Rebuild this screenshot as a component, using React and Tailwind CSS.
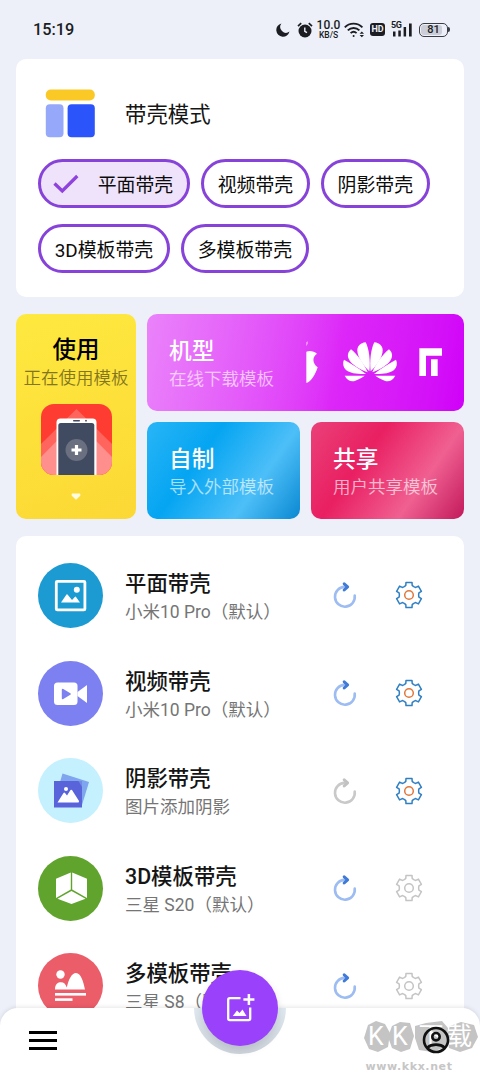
import { useState } from "react";

const modes = ["平面带壳", "视频带壳", "阴影带壳", "3D模板带壳", "多模板带壳"];

const items = [
  { title: "平面带壳", sub: "小米10 Pro（默认）", bg: "bg-[#1b9bd1]", icon: PictureIcon, reset: true, config: true },
  { title: "视频带壳", sub: "小米10 Pro（默认）", bg: "bg-[#7d80f0]", icon: VideoIcon, reset: true, config: true },
  { title: "阴影带壳", sub: "图片添加阴影", bg: "bg-[#c5f0fe]", icon: ShadowIcon, reset: false, config: true },
  { title: "3D模板带壳", sub: "三星 S20（默认）", bg: "bg-[#60a42e]", icon: CubeIcon, reset: true, config: false },
  { title: "多模板带壳", sub: "三星 S8（默认）", bg: "bg-[#eb5d69]", icon: MultiIcon, reset: true, config: false },
];

function PictureIcon() {
  return (
    <svg width="65" height="65" viewBox="0 0 65 65" fill="none">
      <rect x="18.3" y="18.3" width="28.6" height="28.6" rx="1" stroke="#fff" strokeWidth="2.8" />
      <path d="M23 39.5L28.5 31.5Q29 31 29.5 31.5L34 37L37 33.8Q37.6 33.3 38 34L42 39.5Z" fill="#fff" />
      <circle cx="38.8" cy="26.8" r="3" fill="#fff" />
    </svg>
  );
}

function VideoIcon() {
  return (
    <svg width="65" height="65" viewBox="0 0 65 65">
      <rect x="16" y="21.5" width="23.5" height="22.5" rx="3.5" fill="#fff" />
      <path d="M39.5 31L49 24V42L39.5 35Z" fill="#fff" />
      <path d="M24.8 28.8L31.8 33L24.8 37.2Z" fill="#7d80f0" stroke="#7d80f0" strokeWidth="2" strokeLinejoin="round" />
    </svg>
  );
}

function ShadowIcon() {
  return (
    <svg width="65" height="65" viewBox="0 0 65 65">
      <path d="M24.5 15.5L51 24L44 47L18 38Z" fill="#7fa5ee" />
      <path d="M16 23H40.5L44 26V49.5H16Z" fill="#5964da" />
      <path d="M40.5 23H44V29Z" fill="#6f8be6" />
      <path d="M19.5 44.5L25.5 35Q26.3 34 27 35L29 37.5L32.5 32Q33.2 31.3 34 32L41 43Q41.3 44.5 40 44.5Z" fill="#fff" />
      <circle cx="28" cy="31" r="2" fill="#fff" />
    </svg>
  );
}

function CubeIcon() {
  return (
    <svg width="65" height="65" viewBox="0 0 65 65" fill="#fff">
      <path d="M32.8 16.5V33.5L18 42V22.8Z" />
      <path d="M34.2 16.5L49 22.8V42L34.2 33.5Z" />
      <path d="M33.5 35L47.5 42.8L33.5 48L19.5 42.8Z" />
    </svg>
  );
}

function MultiIcon() {
  return (
    <svg width="65" height="65" viewBox="0 0 65 65" fill="#fff">
      <circle cx="22.5" cy="21.5" r="4.2" />
      <path d="M17 36.5C17 31 20 29.3 23 29.3C26 29.3 27.5 31 28.8 34.5C30.5 27 33.5 20 38 20C43 20 45.5 29 47 36.5Z" />
      <rect x="17" y="40" width="31" height="2.6" />
      <rect x="17" y="45.3" width="17.5" height="2.6" />
    </svg>
  );
}

function ResetIcon({ active }) {
  return (
    <svg width="26" height="28" viewBox="0 0 26 28" fill="none" strokeLinecap="round" strokeLinejoin="round">
      <path d="M22.7 14.5A9.9 9.9 0 1 1 12.6 5.9" stroke={active ? "#9dbcf2" : "#c9c9c9"} strokeWidth="2.6" />
      <path d="M12.2 2.8L15.6 5.9L12.2 9" stroke={active ? "#3f7ad8" : "#c2c2c2"} strokeWidth="3" />
    </svg>
  );
}

// six identical teeth, each one turned by 60 degrees
const gearPath =
  [0, 60, 120, 180, 240, 300]
    .map((deg, i) => {
      const a = (deg * Math.PI) / 180;
      const p = (x, y) =>
        `${(x * Math.cos(a) - y * Math.sin(a)).toFixed(2)} ${(x * Math.sin(a) + y * Math.cos(a)).toFixed(2)}`;
      return `${i ? "L" : "M"}${p(-4.4, -8.6)}L${p(-3.2, -9.6)}L${p(-3, -12.6)}L${p(3, -12.6)}L${p(3.2, -9.6)}L${p(4.4, -8.6)}`;
    })
    .join("") + "Z";

function GearIcon({ active }) {
  return (
    <svg width="28" height="28" viewBox="-14 -14 28 28" fill="none">
      <path d={gearPath} stroke={active ? "#2f7fc3" : "#c4c4c4"} strokeWidth="1.5" strokeLinejoin="round" />
      <circle r="4.3" stroke={active ? "#e0783c" : "#c4c4c4"} strokeWidth="1.5" />
    </svg>
  );
}

function StatusBar() {
  return (
    <div className="h-[59px] shrink-0 flex items-center justify-between pl-[33px] pr-[30px] text-[#1b1d22]">
      <span className="text-[16.3px] leading-5 font-medium">15:19</span>
      <div className="flex items-center">
        <svg width="14" height="14" viewBox="0 0 14 14" className="mr-[7px]">
          <path d="M5.4 0.5A5.8 5.8 0 0 0 13.5 8.6A6.7 6.7 0 1 1 5.4 0.5Z" fill="currentColor" />
        </svg>
        <svg width="16" height="16" viewBox="0 0 16 16" fill="none" className="mr-[4px]">
          <circle cx="8" cy="9" r="6.5" fill="currentColor" />
          <path d="M1 4.2L4.2 1.2M15 4.2L11.8 1.2" stroke="currentColor" strokeWidth="1.7" />
          <path d="M7.8 5.5V9.3L10 10.6" stroke="#edf0f9" strokeWidth="1.4" />
        </svg>
        <div className="w-[23px] mr-[4px] -mt-px flex flex-col items-center font-medium">
          <span className="text-[12px] leading-[11px]">10.0</span>
          <span className="text-[8.5px] leading-[8px]">KB/S</span>
        </div>
        <svg width="21" height="16" viewBox="0 0 21 16" fill="none" stroke="currentColor" strokeWidth="1.9" className="mr-[5px]">
          <path d="M0.8 5.3C5.5 0.4 13.5 0.4 18.4 5.3M3.8 8.4C7 5.2 12.2 5.2 15.4 8.4M6.6 11.1C8.4 9.5 10.8 9.5 12.6 11.1" />
          <circle cx="9.6" cy="14" r="1" fill="currentColor" stroke="none" />
          <path d="M15.6 11.7L17.8 9.4L20 11.7ZM15.6 13L17.8 15.3L20 13Z" fill="currentColor" stroke="none" />
        </svg>
        <span className="w-[15px] h-[13px] mr-[6px] rounded-[3px] bg-[#1b1d22] text-[#edf0f9] text-[9px] leading-[13px] font-bold text-center">
          HD
        </span>
        <div className="relative w-[22px] h-[16px] mr-[6px]">
          <span className="absolute left-0 -top-px text-[9px] leading-[8px] font-bold tracking-[-0.5px]">5G</span>
          <svg width="22" height="16" viewBox="0 0 22 16" fill="currentColor">
            <path d="M2 9.5H4.5V14.5H2ZM7.3 8.5H9.8V14.5H7.3ZM12.6 5H15.1V14.5H12.6ZM18 1.5H20.7V14.5H18Z" />
          </svg>
        </div>
        <div className="w-[29px] h-[14px] rounded-[5px] border border-[#3a3d44] p-px">
          <div className="w-[21px] h-[10px] rounded-[3px] bg-[#cbced8] text-[11px] leading-[10.5px] font-medium text-center pl-[4px]">
            81
          </div>
        </div>
        <div className="w-[2px] h-[5px] rounded-r bg-[#3a3d44]" />
      </div>
    </div>
  );
}

function ModeCard() {
  const [selected, setSelected] = useState("平面带壳");

  return (
    <section className="h-[238px] shrink-0 mx-4 rounded-[10px] bg-white px-[22px]">
      <div className="flex items-center h-[100px] pt-[10px] pl-[7px]">
        <svg width="50" height="49" viewBox="0 0 50 49" className="-mt-[2px]">
          <rect x="0.8" y="0.5" width="49" height="11" rx="5" fill="#fbc926" />
          <rect x="0.8" y="15.3" width="17.7" height="33" rx="4" fill="#96a8fa" />
          <rect x="22.6" y="15.3" width="27.2" height="33" rx="4" fill="#2b55fb" />
        </svg>
        <h2 className="ml-[30px] mt-[2px] text-[21.4px] leading-7 text-[#151515]">带壳模式</h2>
      </div>
      <div className="flex flex-wrap gap-x-[11px] gap-y-4">
        {modes.map((mode) => (
          <button
            key={mode}
            onClick={() => setSelected(mode)}
            className={`h-[49px] flex items-center rounded-full border-3 border-[#8743d9] px-[13.7px] pt-[5px] text-[18.9px] leading-6 text-[#0c0c0c] whitespace-nowrap ${
              mode === selected ? "bg-[#efe3fb]" : "bg-white"
            }`}
          >
            {mode === selected && (
              <svg width="26" height="20" viewBox="0 0 26 20" fill="none" className="-mt-[5px] -ml-[2px] mr-[19px]">
                <path d="M1.5 9.5L9.3 17L24.3 2" stroke="#8f43dd" strokeWidth="3.3" />
              </svg>
            )}
            {mode}
          </button>
        ))}
      </div>
    </section>
  );
}

function TileText({ title, sub }) {
  return (
    <div className="pt-[3px] text-white">
      <h3 className="text-[22.7px] leading-7 font-medium">{title}</h3>
      <p className="mt-px text-[17.5px] leading-6 font-[350] text-white/65 whitespace-nowrap">{sub}</p>
    </div>
  );
}

function Brands() {
  return (
    <svg width="150" height="55" viewBox="0 0 450 165" fill="#fff">
      <path d="M19 50C30 46 42 49 51 56C37 64 36 84 53 97C46 118 34 140 19 144Z" />
      <path d="M19 22L23 19V26L19 34Z" opacity="0.6" />
      <g id="petals">
        <path d="M208 109C212 80 207 40 197 22C180 24 172 34 172 46C172 68 192 94 208 109Z" />
        <path d="M203 112C192 86 172 58 153 43C143 52 142 62 146 71C152 88 182 104 203 112Z" />
        <path d="M198 117C178 101 152 84 132 74C127 84 129 96 138 105C149 115 175 118 198 117Z" />
        <path d="M194 122H134C142 137 155 142 166 137C178 132 188 127 194 122Z" />
      </g>
      <use href="#petals" transform="matrix(-1 0 0 1 420 0)" />
      <path d="M358 40H426V62H378V123H358ZM393 73H413V123H393Z" />
    </svg>
  );
}

function Tiles() {
  return (
    <section className="h-[205px] shrink-0 mx-4 mt-[17px] flex gap-[11px]">
      <div className="w-[120px] rounded-[10px] bg-linear-160 from-[#fee93f] to-[#fcd835] flex flex-col items-center pt-[22px]">
        <h3 className="text-[23.5px] leading-7 font-medium text-black">使用</h3>
        <p className="mt-[2px] text-[17.5px] leading-6 font-[350] text-[#83761f] whitespace-nowrap">正在使用模板</p>
        <svg width="71" height="71" viewBox="0 0 71 71" className="mt-[14px]">
          <clipPath id="appShape">
            <rect width="71" height="71" rx="13" />
          </clipPath>
          <g clipPath="url(#appShape)">
            <rect width="71" height="71" fill="#ff3c31" />
            <path d="M35.5 5L71 40V71H0V40Z" fill="#ff655c" />
            <path d="M35.5 17L71 53V71H0V53Z" fill="#ff8f8d" />
            <rect x="15.5" y="14.5" width="40" height="62" rx="4" fill="#fff" />
            <rect x="17.3" y="19" width="36" height="60" rx="2.5" fill="#404a60" />
            <rect x="32" y="16" width="7" height="1.4" rx="0.7" fill="#404a60" />
            <circle cx="45" cy="16.7" r="0.9" fill="#404a60" />
            <circle cx="35.5" cy="46" r="11" fill="#6a7080" />
            <path d="M33.9 41H37.1V44.4H40.5V47.6H37.1V51H33.9V47.6H30.5V44.4H33.9Z" fill="#fff" />
          </g>
        </svg>
        <svg width="10" height="7" viewBox="0 0 10 7" className="mt-[18px]">
          <path d="M1 0.5H9Q10 2 9 3L5 6.7L1 3Q0 2 1 0.5Z" fill="#fffbe0" />
        </svg>
      </div>
      <div className="flex-1 flex flex-col gap-[11px]">
        <div className="h-[97px] rounded-[10px] bg-linear-100 from-[#ea82fa] via-[#dd26f8] via-60% to-[#d000f8] flex items-center justify-between pl-[22px] pr-[14px]">
          <TileText title="机型" sub="在线下载模板" />
          <Brands />
        </div>
        <div className="h-[97px] flex gap-[11px]">
          <div className="flex-1 rounded-[10px] bg-[linear-gradient(125deg,#29b5f6_0%,#05a5f2_35%,#4dbff8_70%,#0a88d2_100%)] flex items-center pl-[22px]">
            <TileText title="自制" sub="导入外部模板" />
          </div>
          <div className="flex-1 rounded-[10px] bg-[linear-gradient(125deg,#ea4179_0%,#e91f62_35%,#f06091_70%,#c2195b_100%)] flex items-center pl-[22px]">
            <TileText title="共享" sub="用户共享模板" />
          </div>
        </div>
      </div>
    </section>
  );
}

function ItemList() {
  return (
    <section className="mx-4 mt-[17px] h-[560px] shrink-0 rounded-t-[10px] bg-white pt-[10.7px] pl-[22px] pr-[41px]">
      {items.map(({ title, sub, bg, icon: Icon, reset, config }) => (
        <div key={title} className="h-[97.6px] flex items-center">
          <div className={`size-[65px] shrink-0 rounded-full overflow-hidden ${bg}`}>
            <Icon />
          </div>
          <div className="ml-[22px] pt-[5px] flex-1 whitespace-nowrap">
            <h3 className="text-[21.4px] leading-7 font-medium text-[#151515]">{title}</h3>
            <p className="text-[17.5px] leading-7 text-[#757575]">{sub}</p>
          </div>
          <button className="mr-[37px]">
            <ResetIcon active={reset} />
          </button>
          <button>
            <GearIcon active={config} />
          </button>
        </div>
      ))}
    </section>
  );
}

function Watermark() {
  return (
    <div className="absolute left-[362px] top-[12px] w-[118px] text-center">
      <div className="relative h-[34px]">
        <svg width="118" height="34" viewBox="0 0 118 34" fill="#c4c4c4">
          <path d="M6 5L14 1L23 4L28 13L26 27L16 32L7 29L2 18Z" />
          <path d="M30 6L38 2L48 3L52 16L48 29L39 32L30 28L26 17Z" />
          <path d="M53 6L64 3L80 1L86 8L84 27L70 32L57 30L53 18Z" />
          <path d="M88 6L99 2L112 5L116 17L110 28L98 32L87 28L85 16Z" />
        </svg>
        <div className="absolute inset-0 flex items-center pl-[6px] text-white text-[25px] leading-[34px]">
          <span className="w-[24px] text-left">K</span>
          <span className="w-[23px] text-left">K</span>
          <span className="w-[32px] text-center">下</span>
          <span className="w-[26px] text-left">载</span>
        </div>
      </div>
      <p className="mt-[7px] ml-px w-[92px] font-['DejaVu_Sans'] font-bold text-[11px] leading-[12px] tracking-[0.6px] text-[#c6c6c6]">
        www.kkx.net
      </p>
    </div>
  );
}

function BottomBar() {
  return (
    <nav className="absolute inset-x-0 bottom-0 h-[65px] rounded-t-[18px] bg-white shadow-[0_-1px_4px_rgba(0,0,0,0.1)]">
      <div className="h-full flex items-center justify-between pl-[29px] pr-[30px]">
        <button className="w-[28px] flex flex-col gap-[5px]">
          <span className="h-[3px] bg-black" />
          <span className="h-[3px] bg-black" />
          <span className="h-[3px] bg-black" />
        </button>
      </div>
      <Watermark />
      <svg width="28" height="28" viewBox="0 0 28 28" fill="none" stroke="#111" strokeWidth="2.6" className="absolute left-[422px] top-[18px]">
        <circle cx="14" cy="14" r="12" />
        <circle cx="14" cy="10.7" r="3.7" />
        <path d="M5.5 21.5C9.5 17.6 18.5 17.6 22.5 21.5" />
      </svg>
      {/* Cutout under the floating button */}
      <div className="absolute left-[194px] top-0 w-[92px] h-[46px] rounded-b-full bg-linear-to-b from-[#dfe8ef] to-[#cfd5dd]" />
      <button className="absolute left-[202px] -top-[38px] size-[76px] rounded-full bg-[#9a42fb] shadow-[0_4px_8px_rgba(0,0,0,0.12)] flex items-center justify-center">
        <svg width="30" height="30" viewBox="0 0 30 30" fill="none" className="-ml-px -mt-px">
          <path d="M15.5 5.2H4.8Q3.2 5.2 3.2 6.8V25.6Q3.2 27.2 4.8 27.2H23.6Q25.2 27.2 25.2 25.6V14.5" stroke="#fff" strokeWidth="2.3" />
          <path d="M23.9 1V12M18.4 6.5H29.4" stroke="#fff" strokeWidth="2.5" />
          <path d="M7.8 23L12 17.5L14.5 20L17.5 16.5L21.5 23Z" fill="#fff" />
        </svg>
      </button>
    </nav>
  );
}

export default function App() {
  return (
    <div
      lang="zh-CN"
      className="relative w-[480px] h-[1073px] overflow-hidden flex flex-col bg-[#edf0f9] font-[Roboto,'Noto_Sans_CJK_SC',sans-serif]"
    >
      <StatusBar />
      <ModeCard />
      <Tiles />
      <ItemList />
      <BottomBar />
    </div>
  );
}
